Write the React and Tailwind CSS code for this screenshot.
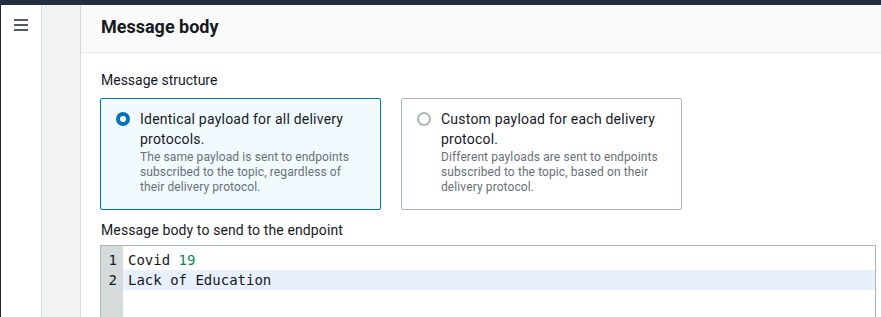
import React from 'react';

const font = { fontFamily: 'Roboto, "Liberation Sans", sans-serif' };

const Radio = ({ checked }) =>
    checked ? (
        <span className="mt-[1px] w-[14px] h-[14px] rounded-full bg-[#0073bb] flex items-center justify-center shrink-0">
            <span className="w-[6px] h-[6px] rounded-full bg-white" />
        </span>
    ) : (
        <span className="mt-[1px] w-[14px] h-[14px] rounded-full border-2 border-[#aab7b8] bg-white shrink-0" />
    );

const Option = ({ checked, title, desc }) => (
    <div className={`w-[281px] h-[112px] rounded-[2px] border pt-[12px] pl-[15px] pr-4 flex gap-[10px] ${checked ? 'border-[#0073bb] bg-[#f1faff]' : 'border-[#aab7b8] bg-white'}`}>
        <Radio checked={checked} />
        <div className="-mt-[2px]">
            <div className="text-[14px] leading-[20px] tracking-[0.22px] text-[#16191f]">{title}</div>
            <div className="text-[12px] leading-[15px] tracking-[0.1px] text-[#687078] mt-[1px]">{desc}</div>
        </div>
    </div>
);

export default function App() {
    return (
        <div className="w-[881px] h-[317px] overflow-hidden flex flex-col bg-white" style={font}>
            <div className="h-[5px] bg-[#232f3e] shrink-0" />
            <div className="flex flex-1 min-h-0">
                {/* side nav */}
                <div className="w-[42px] border-l border-[#2a2220] border-r border-r-[#d5dbdb] bg-white shrink-0 pt-[13px] flex justify-center">
                    <div className="flex flex-col gap-[3px] w-[14px] pt-[1px]">
                        <span className="h-[2px] bg-[#545b64]" />
                        <span className="h-[2px] bg-[#545b64]" />
                        <span className="h-[2px] bg-[#545b64]" />
                    </div>
                </div>
                <div className="w-[39px] bg-[#f2f3f3] border-r border-[#d5dbdb] shrink-0" />

                {/* panel */}
                <div className="flex-1 min-w-0 flex flex-col">
                    <div className="h-[48px] bg-[#fafafa] border-b border-[#eaeded] pl-[20px] flex items-center shrink-0">
                        <h2 className="text-[18px] font-bold text-[#16191f] leading-[22px] -mt-[3px]">Message body</h2>
                    </div>
                    <div className="pl-[19px] pt-[17px]">
                        <div className="text-[14px] leading-[20px] text-[#16191f] pl-[1px]">Message structure</div>
                        <div className="flex gap-[20px] mt-[8px]">
                            <Option
                                checked
                                title={<>Identical payload for all delivery<br />protocols.</>}
                                desc={<>The same payload is sent to endpoints<br />subscribed to the topic, regardless of<br />their delivery protocol.</>}
                            />
                            <Option
                                title={<>Custom payload for each delivery<br />protocol.</>}
                                desc={<>Different payloads are sent to endpoints<br />subscribed to the topic, based on their<br />delivery protocol.</>}
                            />
                        </div>
                        <div className="text-[14px] leading-[20px] tracking-[0.12px] text-[#16191f] mt-[10px] pl-[1px]">Message body to send to the endpoint</div>
                        <div className="mt-[5px] w-[776px] h-[80px] border border-[#aab7b8] flex font-['DejaVu_Sans_Mono',monospace] text-[14px] leading-[20px] text-[#16191f]">
                            <div className="w-[22px] bg-[#d5dbdb] pt-[4px] text-right pr-[6px] shrink-0">
                                <div>1</div>
                                <div>2</div>
                            </div>
                            <div className="flex-1 pt-[4px]">
                                <div className="pl-[5px]">Covid <span className="text-[#098658]">19</span></div>
                                <div className="pl-[5px] bg-[#e8effd]">Lack of Education</div>
                            </div>
                        </div>
                    </div>
                </div>
            </div>
        </div>
    );
}
